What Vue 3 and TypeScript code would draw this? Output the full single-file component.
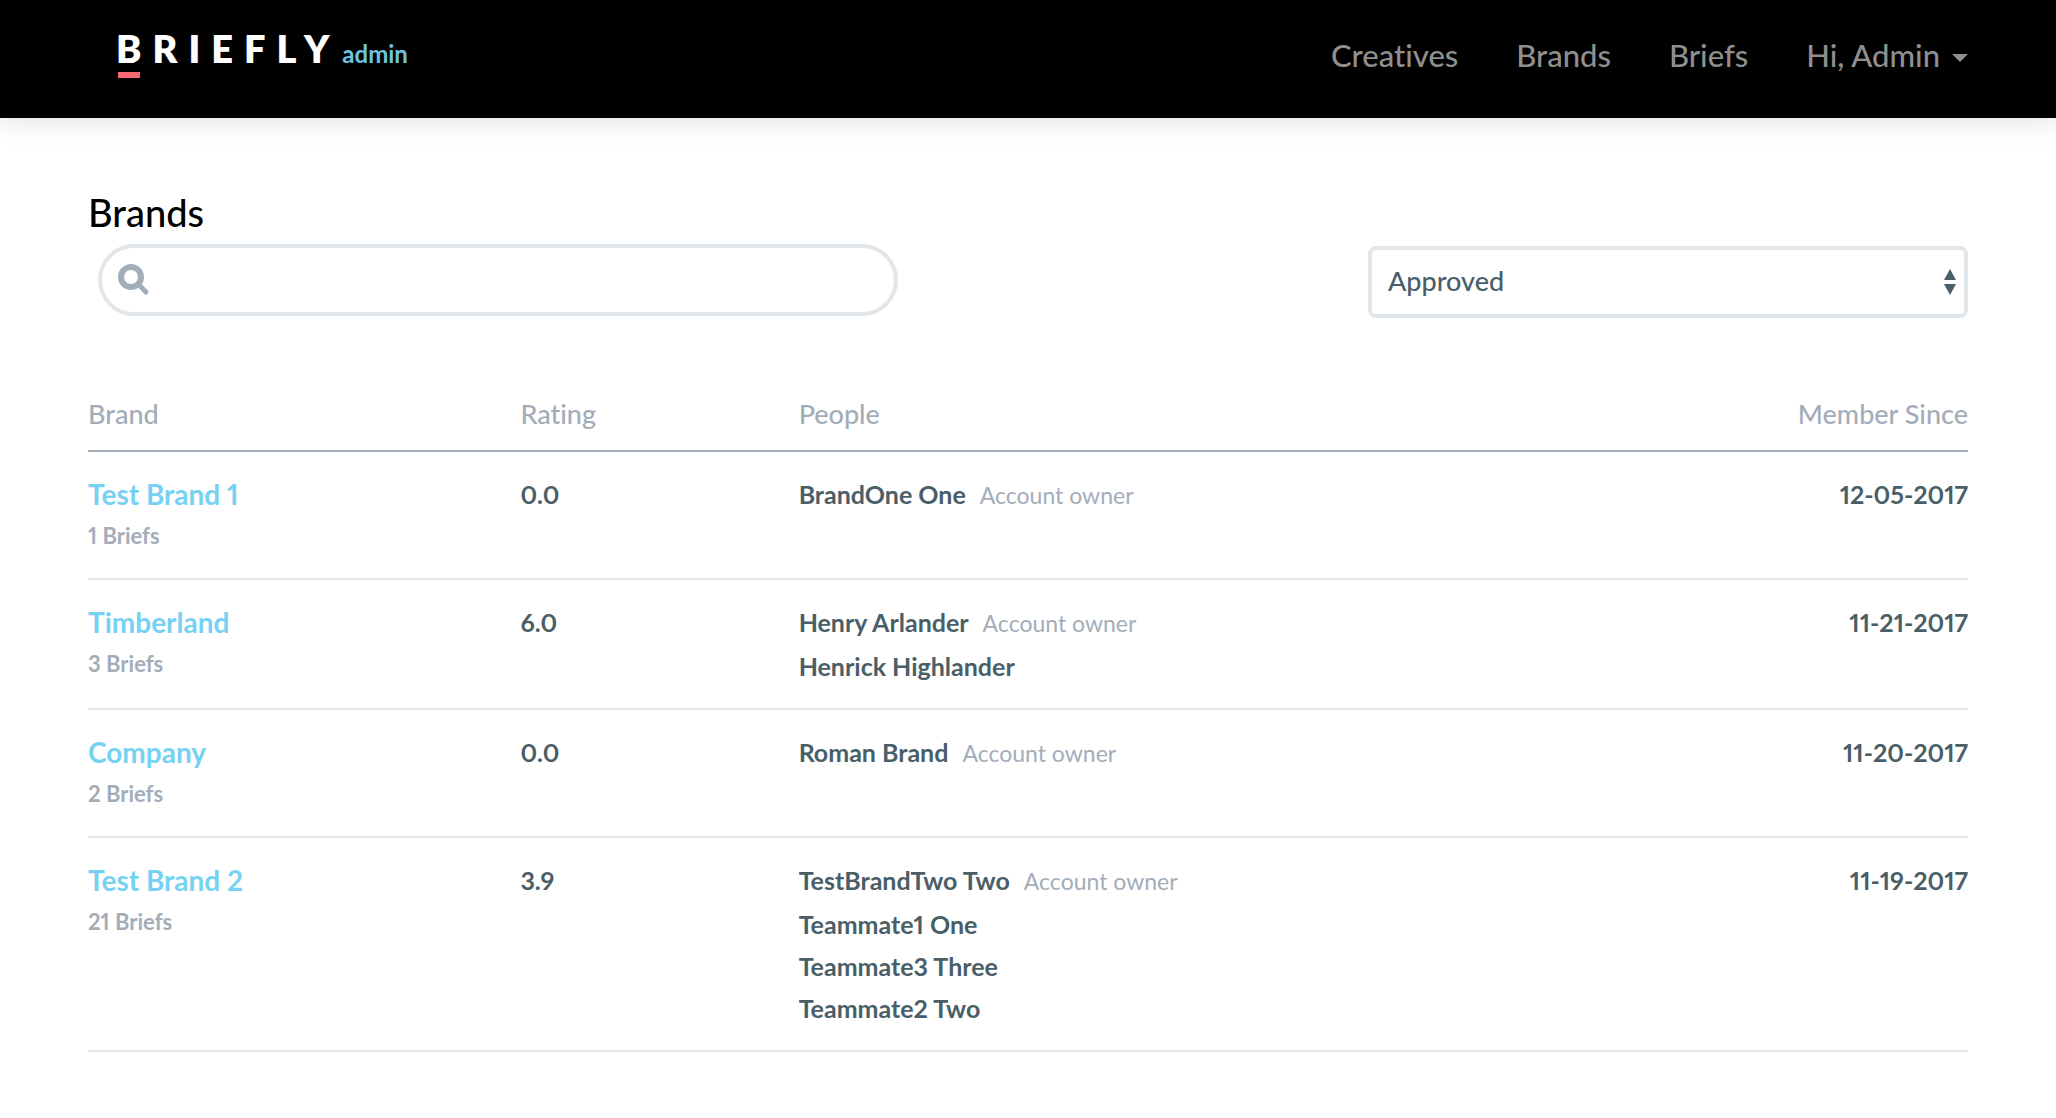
<script setup lang="ts">
import { ref } from 'vue'

interface Person {
  name: string
  owner?: boolean
}

interface Brand {
  name: string
  briefs: number
  rating: string
  people: Person[]
  since: string
}

const links: string[] = ['Creatives', 'Brands', 'Briefs']
const statuses: string[] = ['Approved', 'Pending', 'Rejected']
const status = ref<string>('Approved')
const query = ref<string>('')

const brands: Brand[] = [
  { name: 'Test Brand 1', briefs: 1, rating: '0.0', since: '12-05-2017', people: [{ name: 'BrandOne One', owner: true }] },
  {
    name: 'Timberland',
    briefs: 3,
    rating: '6.0',
    since: '11-21-2017',
    people: [{ name: 'Henry Arlander', owner: true }, { name: 'Henrick Highlander' }],
  },
  { name: 'Company', briefs: 2, rating: '0.0', since: '11-20-2017', people: [{ name: 'Roman Brand', owner: true }] },
  {
    name: 'Test Brand 2',
    briefs: 21,
    rating: '3.9',
    since: '11-19-2017',
    people: [
      { name: 'TestBrandTwo Two', owner: true },
      { name: 'Teammate1 One' },
      { name: 'Teammate3 Three' },
      { name: 'Teammate2 Two' },
    ],
  },
]
</script>

<template>
  <div class="page">
    <header class="topbar">
      <a class="logo" href="#">
        <span class="wordmark"><span class="initial">B</span>RIEFLY</span>
        <span class="suffix">admin</span>
      </a>
      <nav class="nav">
        <a v-for="link in links" :key="link" href="#">{{ link }}</a>
        <button type="button" class="account">
          Hi, Admin
          <svg width="16" height="8" viewBox="0 0 16 8" aria-hidden="true"><path d="M0 0h16L8 8z" fill="currentColor" /></svg>
        </button>
      </nav>
    </header>

    <main class="content">
      <h1>Brands</h1>
      <div class="filters">
        <label class="search">
          <svg width="32" height="32" viewBox="0 0 32 32" fill="none" stroke="currentColor" aria-hidden="true">
            <circle cx="13" cy="13" r="10" stroke-width="6" />
            <path d="M21 21l7 7" stroke-width="5" stroke-linecap="round" />
          </svg>
          <input v-model="query" type="search" aria-label="Search brands" />
        </label>
        <div class="picker">
          <select v-model="status" aria-label="Status">
            <option v-for="s in statuses" :key="s">{{ s }}</option>
          </select>
          <svg class="arrows" width="12" height="26" viewBox="0 0 12 26" aria-hidden="true">
            <path d="M6 0l6 11H0zM0 15h12L6 26z" fill="currentColor" />
          </svg>
        </div>
      </div>

      <table>
        <thead>
          <tr>
            <th class="col-brand" scope="col">Brand</th>
            <th class="col-rating" scope="col">Rating</th>
            <th scope="col">People</th>
            <th class="col-since" scope="col">Member Since</th>
          </tr>
        </thead>
        <tbody>
          <tr v-for="brand in brands" :key="brand.name">
            <td>
              <a class="name" href="#">{{ brand.name }}</a>
              <div class="briefs">{{ brand.briefs }} Briefs</div>
            </td>
            <td>{{ brand.rating }}</td>
            <td>
              <div v-for="person in brand.people" :key="person.name" class="person" :class="{ lead: person.owner }">
                <span>{{ person.name }}</span>
                <span v-if="person.owner" class="role">Account owner</span>
              </div>
            </td>
            <td class="col-since">{{ brand.since }}</td>
          </tr>
        </tbody>
      </table>
    </main>
  </div>
</template>

<style>
body {
  margin: 0;
  background: #fff;
}
</style>

<style scoped>
.page,
.page button,
.page input,
.page select {
  font-family: Lato, 'Open Sans', sans-serif;
  font-variant-ligatures: none;
  font-variant-numeric: proportional-nums;
  font-weight: 500;
}

.page {
  color: #4a5e68;
}

a {
  text-decoration: none;
}

.topbar {
  display: flex;
  align-items: center;
  justify-content: space-between;
  box-sizing: border-box;
  height: 118px;
  padding: 0 88px 8px 116px;
  background: #000;
  box-shadow: 0 2px 28px rgba(0, 0, 0, 0.13);
}

.logo {
  display: flex;
  align-items: baseline;
  padding-bottom: 8px;
  line-height: 40px;
}

.wordmark {
  color: #fff;
  font-size: 38px;
  font-weight: 800;
  letter-spacing: 11px;
}

.initial {
  position: relative;
}

.initial::after {
  content: '';
  position: absolute;
  left: 2px;
  right: 12px;
  bottom: -7px;
  height: 6px;
  background: #f86573;
}

.suffix {
  margin-left: 2px;
  color: #6cc5e0;
  font-size: 24px;
  font-weight: 700;
}

.nav {
  display: flex;
  align-items: center;
  gap: 58px;
}

.nav a,
.account {
  color: #8f8f8f;
  font-size: 31px;
  line-height: 40px;
}

.account {
  display: flex;
  align-items: center;
  gap: 12px;
  padding: 0;
  border: 0;
  background: none;
}

.account svg {
  margin-top: 6px;
}

.content {
  padding: 70px 88px;
}

h1 {
  margin: 0 0 8px;
  color: #000;
  font-size: 38px;
  font-weight: 500;
  line-height: 48px;
}

.filters {
  display: flex;
  justify-content: space-between;
  align-items: flex-start;
}

.search {
  display: flex;
  align-items: center;
  gap: 12px;
  box-sizing: border-box;
  width: 800px;
  height: 72px;
  margin-left: 10px;
  padding: 0 32px 0 16px;
  border: 4px solid #e0e6ea;
  border-radius: 36px;
  color: #a3adb9;
}

.search input {
  flex: 1;
  border: 0;
  outline: 0;
  background: none;
  color: #4a5e68;
  font-size: 27px;
}

.picker {
  position: relative;
  width: 600px;
  margin-top: 2px;
  color: #4a5e68;
}

.picker select {
  display: block;
  width: 100%;
  height: 72px;
  padding: 0 40px 4px 16px;
  border: 4px solid #e0e6ea;
  border-radius: 8px;
  appearance: none;
  background: #fff;
  color: inherit;
  font-size: 27px;
}

.arrows {
  position: absolute;
  top: 23px;
  right: 12px;
  pointer-events: none;
}

table {
  width: 100%;
  margin-top: 74px;
  border-collapse: separate;
  border-spacing: 0;
  table-layout: fixed;
}

th,
td {
  padding: 0;
  text-align: left;
  vertical-align: top;
}

th {
  padding-bottom: 14px;
  border-bottom: 2px solid #a3adb9;
  color: #a3adb9;
  font-size: 27px;
  font-weight: 500;
  line-height: 44px;
}

td {
  padding: 21px 0;
  border-bottom: 2px solid #e0e6ea;
  font-size: 25px;
  font-weight: 700;
  line-height: 42px;
}

.col-brand {
  width: 23%;
}

.col-rating {
  width: 14.8%;
}

.col-since {
  width: 20%;
}

th.col-since,
td.col-since {
  text-align: right;
}

.name {
  display: block;
  color: #76d1f3;
  font-size: 28px;
  line-height: 42px;
}

.briefs {
  color: #a3adb9;
  font-size: 22px;
  line-height: 42px;
}

.person {
  display: flex;
  align-items: baseline;
  gap: 14px;
}

.lead {
  height: 44px;
}

.lead:only-child {
  height: 42px;
}

.role {
  color: #a3adb9;
  font-size: 23px;
  font-weight: 400;
  line-height: 32px;
}
</style>
